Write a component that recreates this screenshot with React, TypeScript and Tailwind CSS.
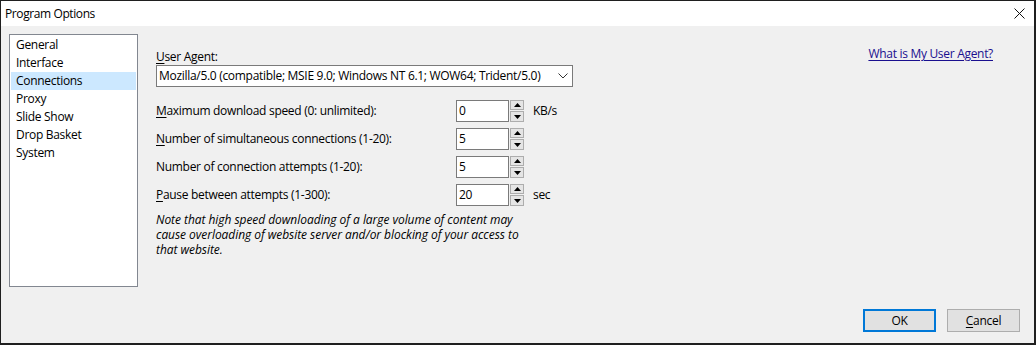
import React from "react";

const font = { fontFamily: '"Open Sans", "Noto Sans", sans-serif' };

function Spin({ value, unit }: { value: string; unit?: string }) {
  return (
    <div className="flex items-center">
      <div className="w-[53px] h-[22px] bg-white border border-[#7a7a7a] flex items-center pl-[2px] text-[12px] leading-[16px] text-black">
        {value}
      </div>
      <div className="ml-[1px] flex flex-col gap-[1px] w-[14px]">
        <div className="h-[10px] bg-[#e5e5e5] border border-[#adadad] flex items-center justify-center">
          <svg width="7" height="4" viewBox="0 0 7 4">
            <path d="M0 4 L3.5 0 L7 4 Z" fill="#000" />
          </svg>
        </div>
        <div className="h-[11px] bg-[#e5e5e5] border border-[#adadad] flex items-center justify-center">
          <svg width="7" height="4" viewBox="0 0 7 4">
            <path d="M0 0 L3.5 4 L7 0 Z" fill="#000" />
          </svg>
        </div>
      </div>
      {unit && <span className="ml-[9px] text-[12px] leading-[16px] text-black">{unit}</span>}
    </div>
  );
}

function Row({ label, u, value, unit }: { label: string; u: boolean; value: string; unit?: string }) {
  return (
    <div className="flex items-center h-[22px]">
      <div className="w-[300px] text-[12px] leading-[16px] text-black">
        {u ? (
          <>
            <span className="underline underline-offset-[2px]">{label[0]}</span>
            {label.slice(1)}
          </>
        ) : (
          label
        )}
      </div>
      <Spin value={value} unit={unit} />
    </div>
  );
}

export default function App() {
  const items = ["General", "Interface", "Connections", "Proxy", "Slide Show", "Drop Basket", "System"];
  return (
    <div
      className="w-[1036px] h-[345px] flex flex-col bg-[#f0f0f0] border-l border-t border-r-2 border-b-2 border-[#1f1f1f] overflow-hidden tracking-[-0.3px]"
      style={font}
    >
      <div className="h-[25px] bg-white flex items-center justify-between pl-[4px] pr-[9px] shrink-0">
        <span className="text-[12px] leading-[16px] text-black tracking-[-0.4px]">Program Options</span>
        <svg width="11" height="11" viewBox="0 0 11 11">
          <path d="M0.5 0.5 L10.5 10.5 M10.5 0.5 L0.5 10.5" stroke="#111" strokeWidth="1" />
        </svg>
      </div>
      <div className="flex-1 flex flex-col">
        <div className="flex items-start">
          <div className="ml-[8px] mt-[8px] w-[129px] h-[253px] bg-white border border-[#828790] p-[1px] flex flex-col">
            {items.map((it) => (
              <div
                key={it}
                className={
                  "h-[18px] pl-[5px] flex items-center text-[12px] leading-[16px] text-black " +
                  (it === "Connections" ? "bg-[#cce8ff]" : "")
                }
              >
                {it}
              </div>
            ))}
          </div>
          <div className="ml-[18px] mt-[20px] w-[837px] flex flex-col">
            <div className="flex items-start justify-between">
              <div className="flex flex-col">
                <div className="mt-[3px] text-[12px] leading-[16px] text-black">
                  <span className="underline underline-offset-[2px]">U</span>ser Agent:
                </div>
                <div className="w-[417px] h-[22px] bg-white border border-[#7a7a7a] flex items-center justify-between pl-[2px] pr-[4px]">
                  <span className="text-[12px] leading-[16px] text-black whitespace-nowrap">
                    Mozilla/5.0 (compatible; MSIE 9.0; Windows NT 6.1; WOW64; Trident/5.0)
                  </span>
                  <svg width="10" height="6" viewBox="0 0 10 6">
                    <path d="M0.5 0.5 L5 5 L9.5 0.5" stroke="#333" strokeWidth="1" fill="none" />
                  </svg>
                </div>
              </div>
              <span className="text-[12px] leading-[16px] text-[#1a0f8f] underline underline-offset-[2px]">
                What is My User Agent?
              </span>
            </div>
            <div className="mt-[13px] flex flex-col gap-[6px]">
              <Row label="Maximum download speed (0: unlimited):" u value="0" unit="KB/s" />
              <Row label="Number of simultaneous connections (1-20):" u value="5" />
              <Row label="Number of connection attempts (1-20):" u={false} value="5" />
              <Row label="Pause between attempts (1-300):" u value="20" unit="sec" />
            </div>
            <div className="mt-[6px] text-[12px] leading-[15px] italic text-black tracking-[-0.05px]">
              Note that high speed downloading of a large volume of content may
              <br />
              cause overloading of website server and/or blocking of your access to
              <br />
              that website.
            </div>
          </div>
        </div>
        <div className="mt-auto flex justify-end gap-[11px] pr-[14px] pb-[11px]">
          <div className="w-[73px] h-[23px] bg-[#e1e1e1] border-2 border-[#0078d7] flex items-center justify-center text-[12px] leading-[16px] text-black">
            OK
          </div>
          <div className="w-[73px] h-[23px] bg-[#e1e1e1] border border-[#adadad] flex items-center justify-center text-[12px] leading-[16px] text-black">
            <span>
              <span className="underline underline-offset-[2px]">C</span>ancel
            </span>
          </div>
        </div>
      </div>
    </div>
  );
}
